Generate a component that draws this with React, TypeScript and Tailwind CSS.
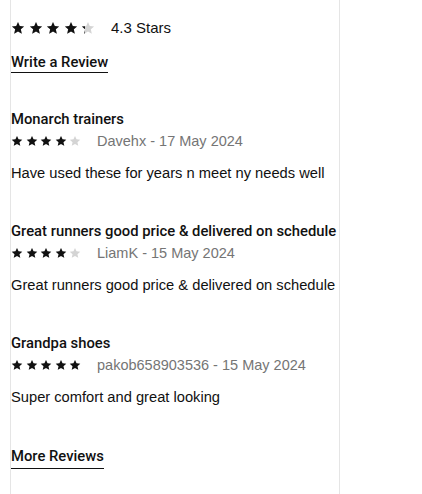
import React from "react"

type Review = {
  title: string
  rating: number
  author: string
  date: string
  body: string
}

const REVIEWS: Review[] = [
  {
    title: "Monarch trainers",
    rating: 4,
    author: "Davehx",
    date: "17 May 2024",
    body: "Have used these for years n meet ny needs well",
  },
  {
    title: "Great runners good price & delivered on schedule",
    rating: 4,
    author: "LiamK",
    date: "15 May 2024",
    body: "Great runners good price & delivered on schedule",
  },
  {
    title: "Grandpa shoes",
    rating: 5,
    author: "pakob658903536",
    date: "15 May 2024",
    body: "Super comfort and great looking",
  },
]

const STAR_PATH = "M12 1.8l3.05 6.9 7.45.7-5.65 4.95 1.7 7.35L12 17.85 5.45 21.7l1.7-7.35L1.5 9.4l7.45-.7z"

function Star({ fill, size }: { fill: number; size: number }) {
  return (
    <span className="relative inline-block shrink-0" style={{ width: size, height: size }}>
      <svg viewBox="0 0 24 24" className="absolute inset-0 h-full w-full fill-[#d4d4d4]">
        <path d={STAR_PATH} />
      </svg>
      <span className="absolute inset-y-0 left-0 overflow-hidden" style={{ width: `${fill * 100}%` }}>
        <svg viewBox="0 0 24 24" className="fill-[#111111]" style={{ width: size, height: size }}>
          <path d={STAR_PATH} />
        </svg>
      </span>
    </span>
  )
}

function Stars({ rating, size, gap }: { rating: number; size: number; gap: string }) {
  return (
    <div className={`flex items-center ${gap}`}>
      {[0, 1, 2, 3, 4].map((i) => (
        <Star key={i} size={size} fill={Math.max(0, Math.min(1, rating - i))} />
      ))}
    </div>
  )
}

// medium weight headings and links
const heading = "font-['Roboto',sans-serif] font-medium text-[14.8px]"

export default function App() {
  return (
    <div className="h-[494px] w-[422px] bg-white text-[#111111] font-['Liberation_Sans',Arial,sans-serif]">
      <div className="ml-[10px] flex h-full w-[330px] flex-col border-x border-[#e5e5e5] pt-[17px] whitespace-nowrap">
        {/* overall rating */}
        <div className="flex items-center">
          <Stars rating={4.3} size={14} gap="gap-[3.5px]" />
          <span className="ml-[16px] text-[15px]">4.3 Stars</span>
        </div>
        <div className="mt-[10px]">
          <a className={`inline-block border-b border-[#111111] leading-[20px] ${heading}`}>Write a Review</a>
        </div>

        {/* reviews */}
        <div className="mt-[36px] flex flex-col gap-[39px]">
          {REVIEWS.map((r) => (
            <div key={r.title} className="flex flex-col">
              <div className={`leading-[18px] ${heading}`}>{r.title}</div>
              <div className="mt-[3px] flex items-center">
                <Stars rating={r.rating} size={12} gap="gap-[2.5px]" />
                <span className="ml-[16px] text-[14.5px] leading-[20px] text-[#757575]">
                  {r.author} - {r.date}
                </span>
              </div>
              <p className="mt-[12px] text-[14.7px] leading-[20px]">{r.body}</p>
            </div>
          ))}
        </div>

        <div className="mt-[37px]">
          <a className={`inline-block border-b border-[#111111] pb-[2px] leading-[20px] ${heading}`}>More Reviews</a>
        </div>
      </div>
    </div>
  )
}
